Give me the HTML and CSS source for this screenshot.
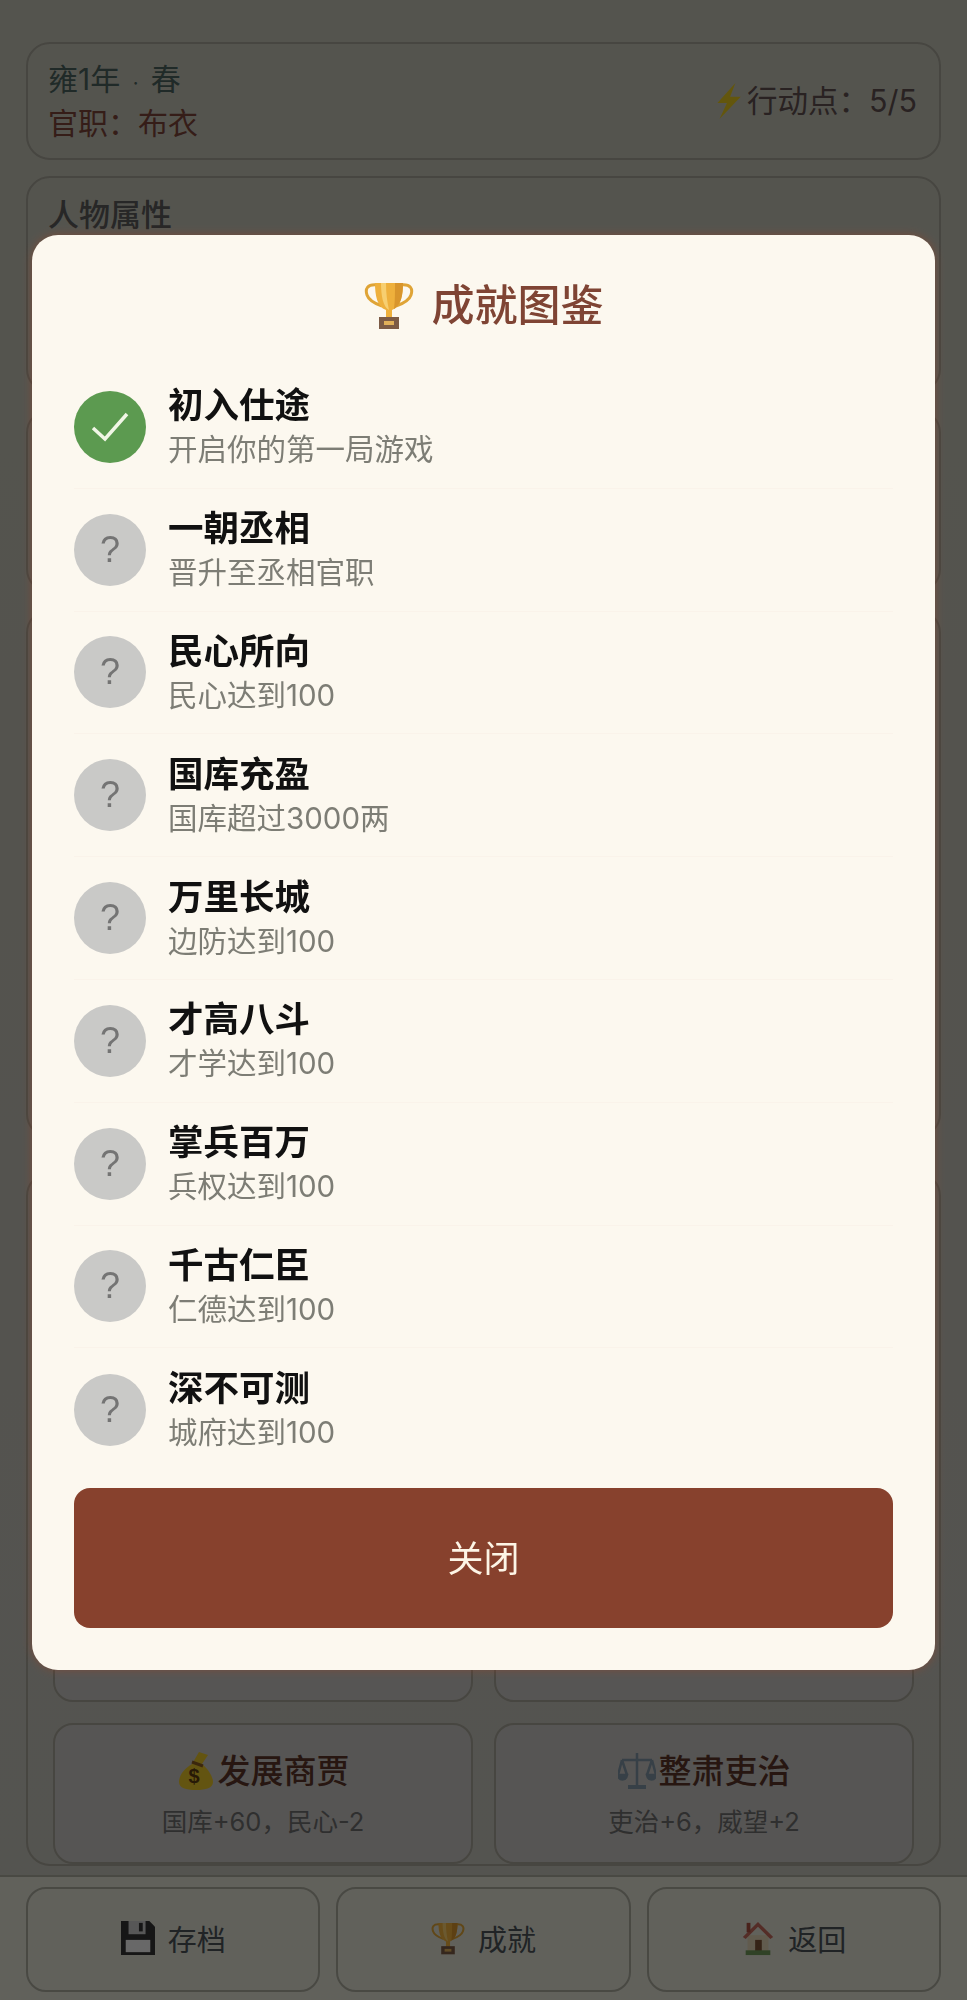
FILE: index.html
```html
<!DOCTYPE html>
<html lang="zh-CN">
<head>
    <meta charset="UTF-8">
    <meta name="viewport" content="width=device-width, initial-scale=1.0">
    <title>成就图鉴</title>
    <link rel="stylesheet" href="styles.css">
</head>
<body>
    <svg class="icon-defs" aria-hidden="true">
        <symbol id="icon-trophy" viewBox="0 0 50 48">
            <path d="M13 4C3 3 1 8 3 14c2 6 9 9 15 11M37 4c10-1 12 4 10 10-2 6-9 9-15 11" fill="none" stroke="#dfa436" stroke-width="3"/>
            <path d="M11 2h28c0 12-2 24-11 27v8h-6v-8C13 26 11 14 11 2z" fill="#eeb03c"/>
            <path d="M17 2h5c0 10 1 18 3 27-6-3-8-15-8-27z" fill="#f7cf70"/>
            <path d="M31 2h8c0 12-2 22-9 26 1-8 1-17 1-26z" fill="#d8952c"/>
            <rect x="15" y="36" width="20" height="12" fill="#7c5b45"/>
            <rect x="20" y="40" width="10" height="4" fill="#e0b05a"/>
        </symbol>
        <symbol id="icon-bolt" viewBox="0 0 26 34">
            <polygon points="20,0 3,19 12,19 5,34 25,13 15,13" fill="#e6c81e"/>
        </symbol>
        <symbol id="icon-floppy" viewBox="0 0 36 36">
            <path d="M0 0h30l6 6v30H0z" fill="#333"/>
            <rect x="8" y="0" width="18" height="14" fill="#c9c9c9"/>
            <rect x="19" y="2" width="4" height="9" fill="#333"/>
            <rect x="5" y="20" width="26" height="13" fill="#f1f1f1"/>
        </symbol>
        <symbol id="icon-house" viewBox="0 0 32 38">
            <rect x="5" y="16" width="22" height="18" fill="#e2d2b4"/>
            <path d="M0 18L16 2l16 16-3 2L16 7 3 20z" fill="#c4685a"/>
            <rect x="4" y="3" width="4" height="10" fill="#a9503f"/>
            <rect x="13" y="21" width="7" height="13" fill="#7b5236"/>
            <rect x="3" y="32" width="26" height="5" fill="#6f9a58"/>
        </symbol>
        <symbol id="icon-scales" viewBox="0 0 38 38">
            <g fill="none" stroke="#7f95a6" stroke-width="2.5">
                <path d="M19 1v32M4 8h30M4 8L0 23M4 8l5 15M34 8l-5 15M34 8l4 15"/>
                <path d="M0 23c1 6 8 6 9 0zM29 23c1 6 8 6 9 0z" fill="#7f95a6"/>
            </g>
            <rect x="10" y="33" width="18" height="4" fill="#7f95a6"/>
        </symbol>
    </svg>

    <div class="page">
        <main class="content">
            <section class="card status-card">
                <div>
                    <div class="year">雍1年 <span class="year-dot">·</span> 春</div>
                    <div class="rank">官职：布衣</div>
                </div>
                <div class="energy">
                    <svg class="bolt"><use href="#icon-bolt"/></svg>
                    <span>行动点：5/5</span>
                </div>
            </section>
            <section class="card attr-card">
                <h3>人物属性</h3>
            </section>
            <section class="card panel-a"></section>
            <section class="card panel-b"></section>
            <section class="card action-card">
                <div class="action-grid">
                    <div class="action-btn"></div>
                    <div class="action-btn"></div>
                    <div class="action-btn">
                        <div class="action-name">
                            <svg class="action-icon" viewBox="0 0 34 38">
                                <path d="M20 0l9 3-6 9c7 6 11 13 11 18 0 6-7 8-17 8S0 36 0 30c0-7 6-14 13-18z" fill="#e6c228"/>
                                <path d="M13 10l11 4" stroke="#8a5a20" stroke-width="3"/>
                                <text x="15" y="31" class="bag-sign">$</text>
                            </svg>
                            <span>发展商贾</span>
                        </div>
                        <div class="action-effect">国库+60，民心-2</div>
                    </div>
                    <div class="action-btn">
                        <div class="action-name">
                            <svg class="action-icon"><use href="#icon-scales"/></svg>
                            <span>整肃吏治</span>
                        </div>
                        <div class="action-effect">吏治+6，威望+2</div>
                    </div>
                </div>
            </section>
        </main>
        <footer class="bottom-bar">
            <div class="bottom-btn">
                <svg class="bottom-icon"><use href="#icon-floppy"/></svg>
                <span>存档</span>
            </div>
            <div class="bottom-btn">
                <svg class="bottom-icon"><use href="#icon-trophy"/></svg>
                <span>成就</span>
            </div>
            <div class="bottom-btn">
                <svg class="bottom-icon"><use href="#icon-house"/></svg>
                <span>返回</span>
            </div>
        </footer>
    </div>

    <div class="overlay">
        <div class="modal">
            <h2 class="modal-title">
                <svg class="title-icon"><use href="#icon-trophy"/></svg>
                <span>成就图鉴</span>
            </h2>
            <ul class="achievement-list">
                <li class="achievement">
                    <div class="badge badge-done">
                        <svg class="check" viewBox="0 0 38 30"><path d="M2 16l12 11L36 2" fill="none" stroke="#f1f6e6" stroke-width="3.5"/></svg>
                    </div>
                    <div class="achievement-text">
                        <div class="achievement-name">初入仕途</div>
                        <div class="achievement-desc">开启你的第一局游戏</div>
                    </div>
                </li>
                <li class="achievement">
                    <div class="badge">?</div>
                    <div class="achievement-text">
                        <div class="achievement-name">一朝丞相</div>
                        <div class="achievement-desc">晋升至丞相官职</div>
                    </div>
                </li>
                <li class="achievement">
                    <div class="badge">?</div>
                    <div class="achievement-text">
                        <div class="achievement-name">民心所向</div>
                        <div class="achievement-desc">民心达到100</div>
                    </div>
                </li>
                <li class="achievement">
                    <div class="badge">?</div>
                    <div class="achievement-text">
                        <div class="achievement-name">国库充盈</div>
                        <div class="achievement-desc">国库超过3000两</div>
                    </div>
                </li>
                <li class="achievement">
                    <div class="badge">?</div>
                    <div class="achievement-text">
                        <div class="achievement-name">万里长城</div>
                        <div class="achievement-desc">边防达到100</div>
                    </div>
                </li>
                <li class="achievement">
                    <div class="badge">?</div>
                    <div class="achievement-text">
                        <div class="achievement-name">才高八斗</div>
                        <div class="achievement-desc">才学达到100</div>
                    </div>
                </li>
                <li class="achievement">
                    <div class="badge">?</div>
                    <div class="achievement-text">
                        <div class="achievement-name">掌兵百万</div>
                        <div class="achievement-desc">兵权达到100</div>
                    </div>
                </li>
                <li class="achievement">
                    <div class="badge">?</div>
                    <div class="achievement-text">
                        <div class="achievement-name">千古仁臣</div>
                        <div class="achievement-desc">仁德达到100</div>
                    </div>
                </li>
                <li class="achievement">
                    <div class="badge">?</div>
                    <div class="achievement-text">
                        <div class="achievement-name">深不可测</div>
                        <div class="achievement-desc">城府达到100</div>
                    </div>
                </li>
            </ul>
            <button class="close-btn">关闭</button>
        </div>
    </div>
</body>
</html>
```

FILE: styles.css
```css
* {
    box-sizing: border-box;
}

html, body {
    margin: 0;
    height: 2000px;
    overflow: hidden;
}

body {
    font-family: Inter, "Noto Sans CJK SC", sans-serif;
    background: linear-gradient(to bottom, #c4c4b6 0, #c2c0b6 900px, #c4c2ba 1860px);
}

.icon-defs {
    width: 0;
    height: 0;
    position: absolute;
}

.bag-sign {
    font-family: "Liberation Sans", sans-serif;
    font-size: 20px;
    font-weight: 700;
    fill: #5a3a10;
    text-anchor: middle;
}

.page {
    height: 2000px;
    display: flex;
    flex-direction: column;
}

.content {
    flex: 1;
    padding: 42px 26px 0;
    display: flex;
    flex-direction: column;
}

.card {
    border: 2px solid #a4a296;
    border-radius: 24px;
}

.status-card {
    height: 118px;
    padding: 0 22px 1px 20px;
    display: flex;
    justify-content: space-between;
    align-items: center;
    font-size: 30px;
    line-height: 40px;
}

.year {
    color: #4a625d;
}

.year-dot {
    margin: 0 4px;
    font-size: 20px;
}

.rank {
    color: #7c4438;
}

.energy {
    display: flex;
    align-items: center;
    font-size: 30.5px;
    color: #5f4f4f;
}

.bolt {
    width: 28px;
    height: 36px;
    margin-right: 5px;
}

.attr-card {
    height: 217px;
    margin-top: 16px;
    padding: 12px 20px;
}

.attr-card h3 {
    margin: 0;
    font-size: 31px;
    font-weight: 500;
    color: #5a5a5a;
}

.panel-a {
    height: 184px;
    margin-top: 16px;
}

.panel-b {
    height: 529px;
    margin-top: 16px;
}

.action-card {
    height: 694px;
    margin-top: 34px;
    padding: 0 25px;
    display: flex;
    align-items: flex-end;
}

.action-grid {
    width: 100%;
    display: grid;
    grid-template-columns: 1fr 1fr;
    gap: 21px 21px;
}

.action-btn {
    height: 141px;
    background-color: #c8c5c2;
    border: 2px solid #a4a296;
    border-radius: 20px;
    padding-bottom: 0;
    display: flex;
    flex-direction: column;
    align-items: center;
    justify-content: center;
}

.action-name {
    display: flex;
    align-items: center;
    font-size: 33px;
    line-height: 44px;
    font-weight: 500;
    color: #5a3528;
}

.action-icon {
    width: 38px;
    height: 38px;
    margin-right: 3px;
}

.action-effect {
    margin-top: 13px;
    font-size: 25.5px;
    line-height: 32px;
    color: #6e6e6e;
}

.bottom-bar {
    height: 125px;
    padding: 10px 26px 8px;
    border-top: 2px solid #a9a99c;
    background-color: #e0e0d4;
    display: grid;
    grid-template-columns: repeat(3, 1fr);
    gap: 16px;
}

.bottom-btn {
    border: 2px solid #a9a99c;
    border-radius: 20px;
    padding-bottom: 4px;
    display: flex;
    align-items: center;
    justify-content: center;
    gap: 13px;
    font-size: 29px;
    color: #4a5257;
}

.bottom-icon {
    width: 34px;
    height: 36px;
}

/* popup */
.overlay {
    position: fixed;
    inset: 0;
    background-color: rgba(0, 0, 0, 0.57);
    padding: 235px 32px 0;
}

.modal {
    height: 1435px;
    padding: 42px;
    background-color: #fcf8ef;
    border-radius: 26px;
    box-shadow: 0 0 10px rgba(150, 70, 40, 0.55);
    display: flex;
    flex-direction: column;
}

.modal-title {
    margin: 0 0 33px;
    height: 56px;
    display: flex;
    align-items: center;
    justify-content: center;
    gap: 18px;
    font-size: 43px;
    line-height: 56px;
    font-weight: 500;
    color: #7f4434;
}

.title-icon {
    width: 50px;
    height: 48px;
}

.achievement-list {
    list-style: none;
    margin: 0;
    padding: 0;
}

.achievement {
    height: 122.8px;
    display: flex;
    align-items: center;
    gap: 22px;
    border-bottom: 1px solid #faf3ea;
}

.achievement:last-child {
    border-bottom: none;
}

.achievement-text {
    padding-bottom: 1px;
}

.badge {
    width: 72px;
    height: 72px;
    border-radius: 50%;
    background-color: #c9c9c7;
    color: #747474;
    font-family: "Liberation Sans", sans-serif;
    font-size: 36px;
    display: flex;
    align-items: center;
    justify-content: center;
    flex-shrink: 0;
}

.badge-done {
    background-color: #5c9a50;
}

.check {
    width: 38px;
    height: 30px;
}

.achievement-name {
    font-size: 35.5px;
    line-height: 47px;
    font-weight: 700;
    color: #111;
}

.achievement-desc {
    font-size: 29.5px;
    line-height: 41px;
    color: #7d7d75;
}

.close-btn {
    height: 142px;
    margin-top: 17px;
    padding-bottom: 6px;
    border: none;
    border-radius: 16px;
    background-color: #87412d;
    color: #fdf5e6;
    font-family: inherit;
    font-size: 36px;
}
```
